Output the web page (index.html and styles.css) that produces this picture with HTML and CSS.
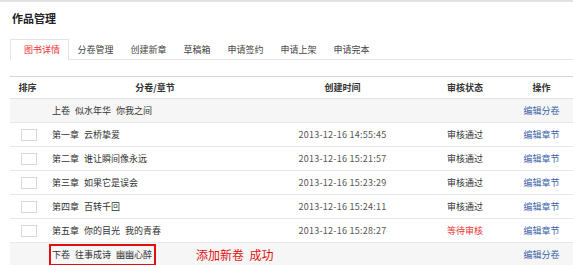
FILE: index.html
```html
<!DOCTYPE html>
<html lang="zh-CN">
  <head>
    <meta charset="UTF-8" />
    <title>作品管理</title>
    <link rel="stylesheet" href="styles.css">
  </head>
  <body>
    <div class="page">
      <h2 class="page-title">作品管理</h2>

      <!-- タブ -->
      <ul class="tabs">
        <li class="tab active">图书详情</li>
        <li class="tab">分卷管理</li>
        <li class="tab">创建新章</li>
        <li class="tab">草稿箱</li>
        <li class="tab">申请签约</li>
        <li class="tab">申请上架</li>
        <li class="tab">申请完本</li>
      </ul>

      <!-- 章节一覧 -->
      <table class="chapters">
        <thead>
          <tr>
            <th class="col-sort">排序</th>
            <th class="col-title">分卷/章节</th>
            <th class="col-time">创建时间</th>
            <th class="col-status">审核状态</th>
            <th class="col-op">操作</th>
          </tr>
        </thead>
        <tbody>
          <tr class="volume">
            <td></td>
            <td class="title">上卷 似水年华 你我之间</td>
            <td></td>
            <td></td>
            <td class="op"><a href="#">编辑分卷</a></td>
          </tr>
          <tr>
            <td class="sort"><input class="sort-input" type="text"></td>
            <td class="title">第一章 云桥挚爱</td>
            <td class="time">2013-12-16 14:55:45</td>
            <td class="status">审核通过</td>
            <td class="op"><a href="#">编辑章节</a></td>
          </tr>
          <tr>
            <td class="sort"><input class="sort-input" type="text"></td>
            <td class="title">第二章 谁让瞬间像永远</td>
            <td class="time">2013-12-16 15:21:57</td>
            <td class="status">审核通过</td>
            <td class="op"><a href="#">编辑章节</a></td>
          </tr>
          <tr>
            <td class="sort"><input class="sort-input" type="text"></td>
            <td class="title">第三章 如果它是误会</td>
            <td class="time">2013-12-16 15:23:29</td>
            <td class="status">审核通过</td>
            <td class="op"><a href="#">编辑章节</a></td>
          </tr>
          <tr>
            <td class="sort"><input class="sort-input" type="text"></td>
            <td class="title">第四章 百转千回</td>
            <td class="time">2013-12-16 15:24:11</td>
            <td class="status">审核通过</td>
            <td class="op"><a href="#">编辑章节</a></td>
          </tr>
          <tr>
            <td class="sort"><input class="sort-input" type="text"></td>
            <td class="title">第五章 你的目光 我的青春</td>
            <td class="time">2013-12-16 15:28:27</td>
            <td class="status pending">等待审核</td>
            <td class="op"><a href="#">编辑章节</a></td>
          </tr>
          <tr class="volume">
            <td></td>
            <td class="title"><span class="highlight">下卷 往事成诗 幽幽心醉</span><span class="notice">添加新卷&nbsp;&nbsp;成功</span></td>
            <td></td>
            <td></td>
            <td class="op"><a href="#">编辑分卷</a></td>
          </tr>
        </tbody>
      </table>
    </div>
  </body>
</html>
```

FILE: styles.css
```css
body {
  margin: 0;
  font-family: "Noto Sans CJK SC", sans-serif;
  font-size: 9px;
  color: #333;
  background: #fff;
  border-top: 2px solid #e2e2e2;
}

.page {
  padding-left: 10px;
}

.page-title {
  margin: 0;
  padding: 9px 0 0 2px;
  font-size: 11px;
  line-height: 14px;
  font-weight: bold;
  color: #222;
}

/* タブ */
.tabs {
  display: flex;
  margin: 14px 0 0;
  padding: 0;
  list-style: none;
  border-bottom: 1px solid #e4e4e4;
}

.tab {
  padding: 0 7.5px;
  height: 19px;
  line-height: 20px;
  color: #444;
  border: 1px solid transparent;
  border-bottom: none;
  margin-bottom: -1px;
}

.tab.active {
  padding: 0 8px 0 13px;
  color: #e33;
  background: #fff;
  border-color: #e4e4e4;
  height: 20px;
}

/* 一覧 */
.chapters {
  width: 563px;
  margin-top: 16px;
  border-collapse: collapse;
  table-layout: fixed;
}

.chapters th {
  height: 21px;
  padding: 0;
  font-weight: bold;
  color: #333;
  border-top: 1px solid #d4d4d4;
  border-bottom: 1px solid #e4e4e4;
}

.col-sort { width: 35px; }
.col-title { width: 220px; }
.col-time { width: 155px; }
.col-status { width: 90px; }
.col-op { width: 63px; }

.chapters td {
  height: 23px;
  padding: 0;
  text-align: center;
  border-bottom: 1px solid #e8e8e8;
  white-space: nowrap;
}

.chapters .volume td {
  background: #f6f6f6;
}

.chapters td.title {
  text-align: left;
  padding-left: 7px;
  word-spacing: 3px;
  overflow: visible;
}

.chapters td.time {
  color: #555;
  letter-spacing: 0.25px;
}

.chapters td.pending {
  color: #e33;
}

.sort-input {
  display: block;
  width: 16px;
  height: 12px;
  margin: 0 0 0 11px;
  padding: 0;
  box-sizing: border-box;
  border: 1px solid #d8d8d8;
  background: #fff;
}

.op a {
  color: #3d5fa8;
  text-decoration: none;
}

.highlight {
  display: inline-block;
  margin-left: -3px;
  padding: 0 2px 0 1px;
  line-height: 18px;
  border: 2px solid #e01010;
  vertical-align: middle;
}

.notice {
  margin-left: 40px;
  font-size: 12px;
  line-height: 18px;
  color: #e01010;
  vertical-align: middle;
  word-spacing: 0;
}
```
